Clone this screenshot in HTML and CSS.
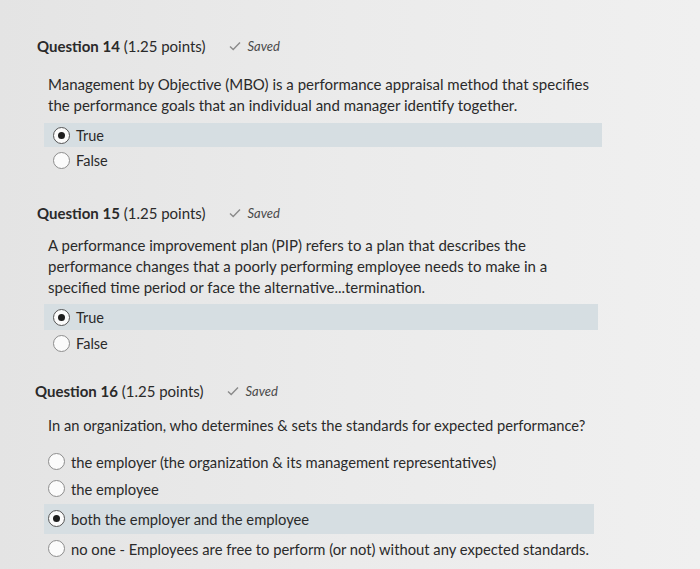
FILE: index.html
```html
<!DOCTYPE html>
<html>
<head>
<meta charset="utf-8">
<link rel="stylesheet" href="styles.css">
</head>
<body>
<div class="page">
  <section class="question q14">
    <div class="q-header">
      <span class="q-title"><b>Question 14</b> (1.25 points)</span>
      <span class="saved"><svg class="check" viewBox="0 0 12 10" width="12" height="10"><path d="M1 5.5 L4.2 8.5 L11 1.5" fill="none" stroke="#8a8a8a" stroke-width="1.4"/></svg><i>Saved</i></span>
    </div>
    <p class="q-text">Management by Objective (MBO) is a performance appraisal method that specifies the performance goals that an individual and manager identify together.</p>
    <div class="options">
      <div class="option selected"><span class="radio"></span><span>True</span></div>
      <div class="option"><span class="radio"></span><span>False</span></div>
    </div>
  </section>

  <section class="question q15">
    <div class="q-header">
      <span class="q-title"><b>Question 15</b> (1.25 points)</span>
      <span class="saved"><svg class="check" viewBox="0 0 12 10" width="12" height="10"><path d="M1 5.5 L4.2 8.5 L11 1.5" fill="none" stroke="#8a8a8a" stroke-width="1.4"/></svg><i>Saved</i></span>
    </div>
    <p class="q-text">A performance improvement plan (PIP) refers to a plan that describes the performance changes that a poorly performing employee needs to make in a specified time period or face the alternative...termination.</p>
    <div class="options">
      <div class="option selected"><span class="radio"></span><span>True</span></div>
      <div class="option"><span class="radio"></span><span>False</span></div>
    </div>
  </section>

  <section class="question q16">
    <div class="q-header">
      <span class="q-title"><b>Question 16</b> (1.25 points)</span>
      <span class="saved"><svg class="check" viewBox="0 0 12 10" width="12" height="10"><path d="M1 5.5 L4.2 8.5 L11 1.5" fill="none" stroke="#8a8a8a" stroke-width="1.4"/></svg><i>Saved</i></span>
    </div>
    <p class="q-text">In an organization, who determines &amp; sets the standards for expected performance?</p>
    <div class="options">
      <div class="option first"><span class="radio"></span><span>the employer (the organization &amp; its management representatives)</span></div>
      <div class="option"><span class="radio"></span><span>the employee</span></div>
      <div class="option selected"><span class="radio"></span><span>both the employer and the employee</span></div>
      <div class="option"><span class="radio"></span><span>no one - Employees are free to perform (or not) without any expected standards.</span></div>
    </div>
  </section>
</div>
</body>
</html>
```

FILE: styles.css
```css
html, body {
  margin: 0;
  padding: 0;
}
body {
  width: 700px;
  height: 569px;
  overflow: hidden;
  background: linear-gradient(to right, #e4e4e4 0%, #ebebeb 50%, #f0f0f0 100%);
  font-family: Lato, "Open Sans", sans-serif;
  color: #2a2a2a;
}
.page {
  padding: 36px 0 0 37px;
}
.question {
  display: flex;
  flex-direction: column;
}
.q-header {
  display: flex;
  align-items: center;
  font-size: 15px;
  line-height: 20px;
  height: 20px;
}
.q-title b {
  font-weight: 700;
}
.saved {
  display: flex;
  align-items: center;
  margin-left: 23px;
  color: #4a4a4a;
  font-size: 13px;
}
.saved .check {
  margin-right: 7px;
}
.q-text {
  margin: 18px 0 0 11px;
  width: 560px;
  font-size: 15px;
  line-height: 20.5px;
}
.options {
  margin: 8px 0 0 7px;
  width: 558px;
  display: flex;
  flex-direction: column;
}
.option {
  display: flex;
  align-items: center;
  height: 26px;
  padding-left: 9px;
  font-size: 14.5px;
}
.option.selected {
  background: #d6dee2;
}
.radio {
  box-sizing: border-box;
  width: 17px;
  height: 17px;
  border-radius: 50%;
  border: 1.5px solid #8d8d8d;
  background: #fbfbfb;
  margin-right: 6px;
  flex: none;
  display: flex;
  align-items: center;
  justify-content: center;
}
.option.selected .radio {
  border-color: #555;
}
.option.selected .radio::after {
  content: "";
  width: 7px;
  height: 7px;
  border-radius: 50%;
  background: #1e1e1e;
}
.q14 .options .option:first-child {
  height: 24px;
}
.q15 {
  margin-top: 30px;
}
.q15 .q-text {
  margin-top: 12px;
  line-height: 21px;
}
.q15 .options {
  margin-top: 6px;
  width: 554px;
}
.q16 {
  margin-top: 25px;
}
.q16 .q-header {
  margin-left: -2px;
}
.q16 .q-text {
  margin-top: 14px;
  font-size: 14.7px;
}
.q16 .options {
  margin-top: 14px;
  width: 550px;
}
.q16 .option {
  height: 30px;
  padding-left: 4px;
  font-size: 14.75px;
}
.q16 .option.first {
  height: 24px;
}
.q16 .option.selected {
  height: 30px;
}
```
